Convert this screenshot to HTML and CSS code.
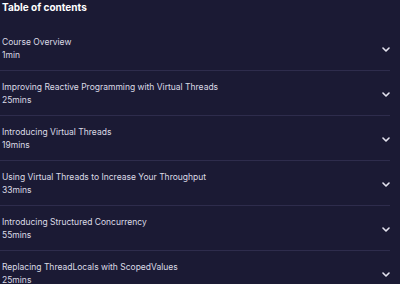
FILE: index.html
```html
<!DOCTYPE html>
<html>
<head>
    <meta charset="utf-8">
    <title>Table of contents</title>
    <link rel="stylesheet" href="styles.css">
</head>
<body>

<div class="toc">

    <h2 class="toc-title">Table of contents</h2>

    <div class="toc-list">

        <div class="toc-item">
            <div class="toc-text">
                <div class="toc-name">Course Overview</div>
                <div class="toc-time">1min</div>
            </div>
            <svg class="toc-chevron" width="8" height="5" viewBox="0 0 8 5"><path d="M1 1l3 3 3-3" fill="none" stroke="#e4e3ef" stroke-width="1.6" stroke-linecap="round" stroke-linejoin="round"/></svg>
        </div>

        <div class="toc-item">
            <div class="toc-text">
                <div class="toc-name">Improving Reactive Programming with Virtual Threads</div>
                <div class="toc-time">25mins</div>
            </div>
            <svg class="toc-chevron" width="8" height="5" viewBox="0 0 8 5"><path d="M1 1l3 3 3-3" fill="none" stroke="#e4e3ef" stroke-width="1.6" stroke-linecap="round" stroke-linejoin="round"/></svg>
        </div>

        <div class="toc-item">
            <div class="toc-text">
                <div class="toc-name">Introducing Virtual Threads</div>
                <div class="toc-time">19mins</div>
            </div>
            <svg class="toc-chevron" width="8" height="5" viewBox="0 0 8 5"><path d="M1 1l3 3 3-3" fill="none" stroke="#e4e3ef" stroke-width="1.6" stroke-linecap="round" stroke-linejoin="round"/></svg>
        </div>

        <div class="toc-item">
            <div class="toc-text">
                <div class="toc-name">Using Virtual Threads to Increase Your Throughput</div>
                <div class="toc-time">33mins</div>
            </div>
            <svg class="toc-chevron" width="8" height="5" viewBox="0 0 8 5"><path d="M1 1l3 3 3-3" fill="none" stroke="#e4e3ef" stroke-width="1.6" stroke-linecap="round" stroke-linejoin="round"/></svg>
        </div>

        <div class="toc-item">
            <div class="toc-text">
                <div class="toc-name">Introducing Structured Concurrency</div>
                <div class="toc-time">55mins</div>
            </div>
            <svg class="toc-chevron" width="8" height="5" viewBox="0 0 8 5"><path d="M1 1l3 3 3-3" fill="none" stroke="#e4e3ef" stroke-width="1.6" stroke-linecap="round" stroke-linejoin="round"/></svg>
        </div>

        <div class="toc-item">
            <div class="toc-text">
                <div class="toc-name">Replacing ThreadLocals with ScopedValues</div>
                <div class="toc-time">25mins</div>
            </div>
            <svg class="toc-chevron" width="8" height="5" viewBox="0 0 8 5"><path d="M1 1l3 3 3-3" fill="none" stroke="#e4e3ef" stroke-width="1.6" stroke-linecap="round" stroke-linejoin="round"/></svg>
        </div>

    </div>

</div>

</body>
</html>
```

FILE: styles.css
```css
* {
    box-sizing: border-box;
    font-family: Inter, "Noto Sans", sans-serif;
}

body {
    margin: 0;
    background: #1b1a34;
    color: #dcdbe6;
}

.toc {
    padding: 0 10px 0 2px;
}

.toc-title {
    margin: 0;
    height: 26px;
    padding-top: 1px;
    font-size: 10px;
    font-weight: 700;
    color: #ffffff;
}

.toc-item {
    display: flex;
    align-items: center;
    justify-content: space-between;
    height: 45px;
    border-bottom: 1px solid #2e2c4c;
    margin-left: -2px;
    padding-left: 2px;
}

.toc-name {
    font-size: 8.5px;
    line-height: 14px;
}

.toc-time {
    font-size: 8.5px;
    line-height: 13px;
}

.toc-chevron {
    display: block;
    margin-top: 2px;
}
```
